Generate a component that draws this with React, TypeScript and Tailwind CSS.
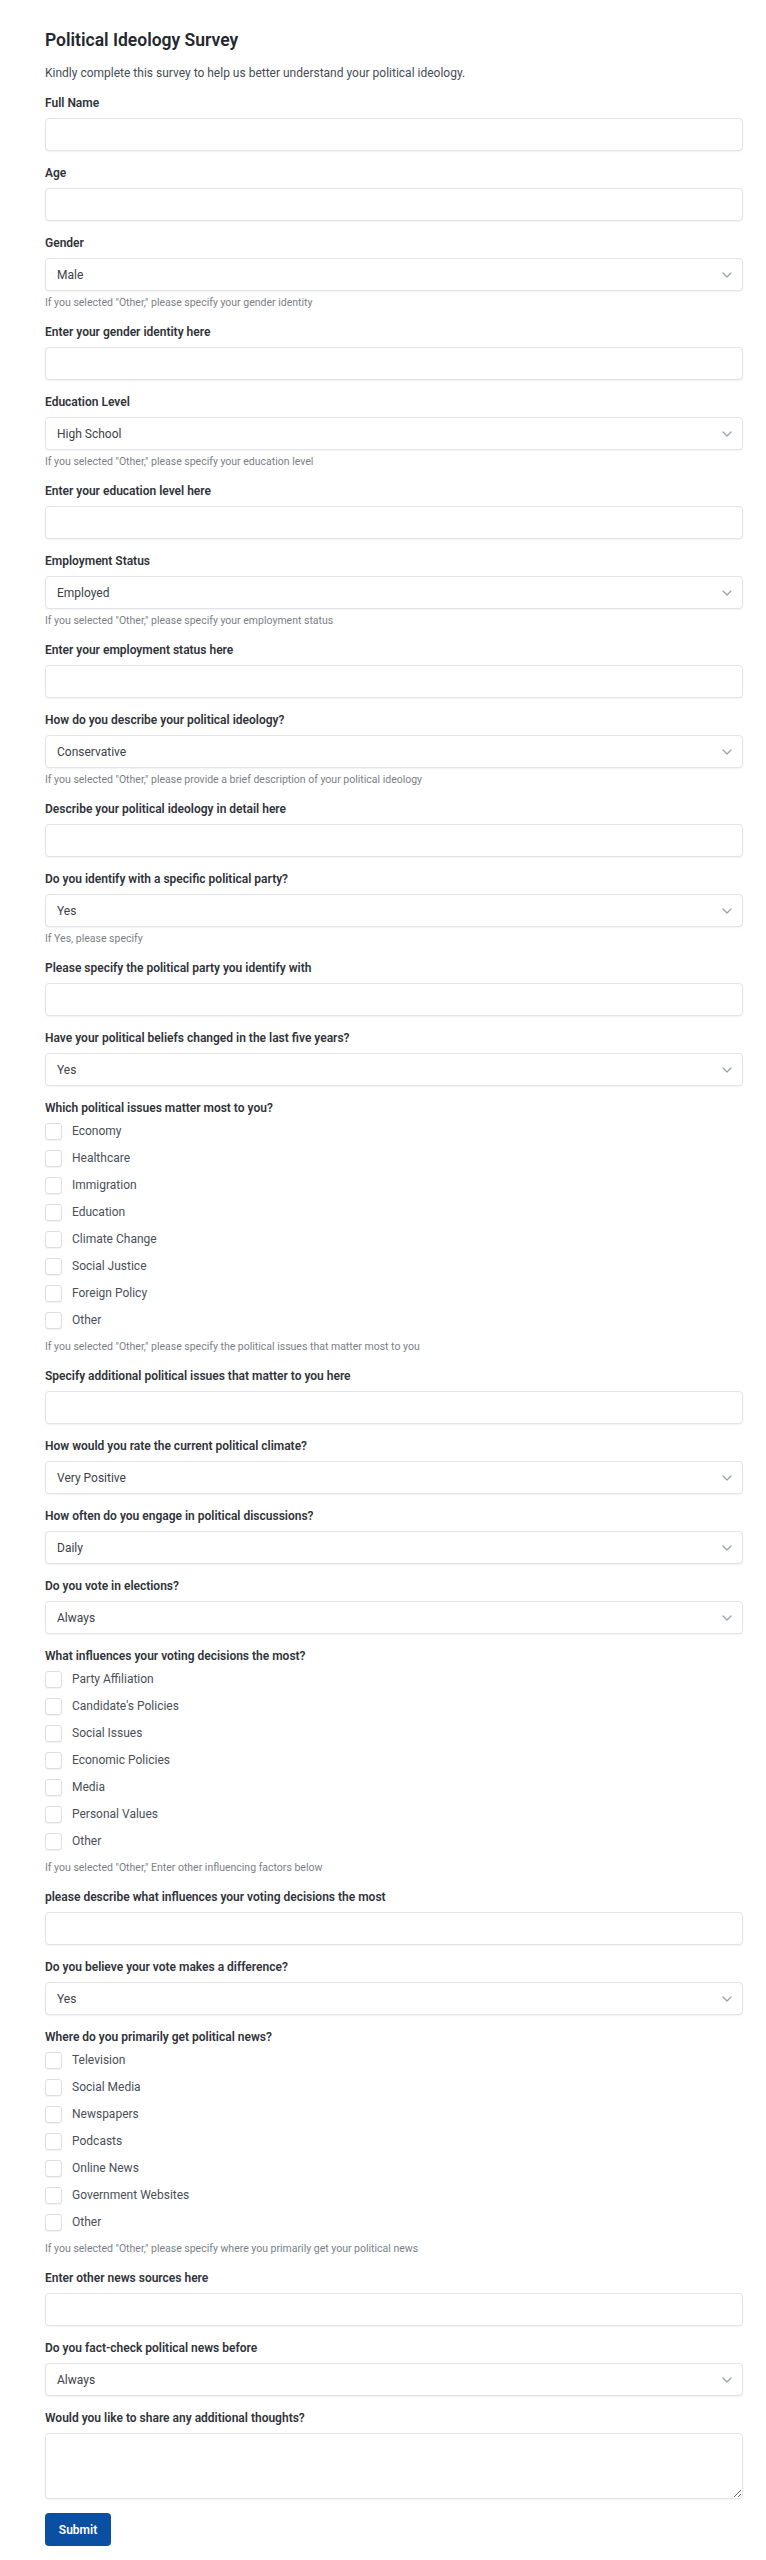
import React from "react";

type Field =
  | { kind: "input"; label: string; helper?: string }
  | { kind: "select"; label: string; value: string; helper?: string }
  | { kind: "checks"; label: string; options: string[]; helper?: string }
  | { kind: "textarea"; label: string };

const fields: Field[] = [
  { kind: "input", label: "Full Name" },
  { kind: "input", label: "Age" },
  { kind: "select", label: "Gender", value: "Male", helper: 'If you selected "Other," please specify your gender identity' },
  { kind: "input", label: "Enter your gender identity here" },
  { kind: "select", label: "Education Level", value: "High School", helper: 'If you selected "Other," please specify your education level' },
  { kind: "input", label: "Enter your education level here" },
  { kind: "select", label: "Employment Status", value: "Employed", helper: 'If you selected "Other," please specify your employment status' },
  { kind: "input", label: "Enter your employment status here" },
  {
    kind: "select",
    label: "How do you describe your political ideology?",
    value: "Conservative",
    helper: 'If you selected "Other," please provide a brief description of your political ideology',
  },
  { kind: "input", label: "Describe your political ideology in detail here" },
  { kind: "select", label: "Do you identify with a specific political party?", value: "Yes", helper: "If Yes, please specify" },
  { kind: "input", label: "Please specify the political party you identify with" },
  { kind: "select", label: "Have your political beliefs changed in the last five years?", value: "Yes" },
  {
    kind: "checks",
    label: "Which political issues matter most to you?",
    options: ["Economy", "Healthcare", "Immigration", "Education", "Climate Change", "Social Justice", "Foreign Policy", "Other"],
    helper: 'If you selected "Other," please specify the political issues that matter most to you',
  },
  { kind: "input", label: "Specify additional political issues that matter to you here" },
  { kind: "select", label: "How would you rate the current political climate?", value: "Very Positive" },
  { kind: "select", label: "How often do you engage in political discussions?", value: "Daily" },
  { kind: "select", label: "Do you vote in elections?", value: "Always" },
  {
    kind: "checks",
    label: "What influences your voting decisions the most?",
    options: ["Party Affiliation", "Candidate's Policies", "Social Issues", "Economic Policies", "Media", "Personal Values", "Other"],
    helper: 'If you selected "Other," Enter other influencing factors below',
  },
  { kind: "input", label: "please describe what influences your voting decisions the most" },
  { kind: "select", label: "Do you believe your vote makes a difference?", value: "Yes" },
  {
    kind: "checks",
    label: "Where do you primarily get political news?",
    options: ["Television", "Social Media", "Newspapers", "Podcasts", "Online News", "Government Websites", "Other"],
    helper: 'If you selected "Other," please specify where you primarily get your political news',
  },
  { kind: "input", label: "Enter other news sources here" },
  { kind: "select", label: "Do you fact-check political news before", value: "Always" },
  { kind: "textarea", label: "Would you like to share any additional thoughts?" },
];

const boxCls =
  "block w-full rounded-[4px] border border-[#e1e4e8] bg-white shadow-[0_1px_2px_rgba(0,0,0,0.06)] outline-none";

function Helper({ text, top }: { text: string; top: string }) {
  return <p className={`${top} text-[10.5px] leading-[15px] text-[#7a7f87]`}>{text}</p>;
}

function Chevron() {
  return (
    <svg
      className="pointer-events-none absolute right-[11px] top-1/2 -translate-y-1/2"
      width="10"
      height="6"
      viewBox="0 0 10 6"
      fill="none"
    >
      <polyline points="1,1 5,5 9,1" stroke="#9aa0a6" strokeWidth="1.2" strokeLinecap="round" strokeLinejoin="round" />
    </svg>
  );
}

function FieldBlock({ field, idx }: { field: Field; idx: number }) {
  const id = `f${idx}`;
  return (
    <div className="mb-[13px]">
      <label htmlFor={id} className="mb-[6px] block text-[12px] font-semibold leading-[18px] text-[#2f3339]">
        {field.label}
      </label>

      {field.kind === "input" && <input id={id} type="text" className={`${boxCls} h-[33px] px-[11px] text-[12px]`} />}

      {field.kind === "select" && (
        <div className="relative">
          <select
            id={id}
            defaultValue={field.value}
            className={`${boxCls} h-[33px] appearance-none pl-[11px] pr-8 text-[12px] text-[#3d4148]`}
          >
            <option>{field.value}</option>
          </select>
          <Chevron />
        </div>
      )}

      {field.kind === "textarea" && <textarea id={id} className={`${boxCls} h-[66px] px-[11px] py-2 text-[12px]`} />}

      {field.kind === "checks" && (
        <div className="flex flex-col gap-[10px]">
          {field.options.map((opt) => (
            <label key={opt} className="flex h-[17px] items-center gap-[10px]">
              <span className="h-[17px] w-[17px] shrink-0 rounded-[3px] border border-[#dcdfe3] bg-white shadow-[0_1px_1px_rgba(0,0,0,0.05)]" />
              <span className="text-[12px] leading-[17px] text-[#4a4f57]">{opt}</span>
            </label>
          ))}
        </div>
      )}

      {"helper" in field && field.helper && (
        <Helper text={field.helper} top={field.kind === "checks" ? "mt-[10px]" : "mt-[4px]"} />
      )}
    </div>
  );
}

export default function App() {
  return (
    <div className="min-h-screen bg-white font-['Roboto','Liberation_Sans',sans-serif]">
      <form className="pb-[16px] pl-[45px] pr-[23px] pt-[28px]" onSubmit={(e) => e.preventDefault()}>
        <h1 className="text-[17.5px] font-semibold leading-[24px] text-[#23272e]">Political Ideology Survey</h1>
        <p className="mb-[12px] mt-[12px] text-[12px] leading-[18px] text-[#474c54]">
          Kindly complete this survey to help us better understand your political ideology.
        </p>

        {fields.map((f, i) => (
          <FieldBlock key={i} field={f} idx={i} />
        ))}

        <button
          type="submit"
          className="mt-[1px] h-[33px] w-[66px] rounded-[4px] bg-[#0b4fa3] text-[12px] font-semibold text-white"
        >
          Submit
        </button>
      </form>
    </div>
  );
}
